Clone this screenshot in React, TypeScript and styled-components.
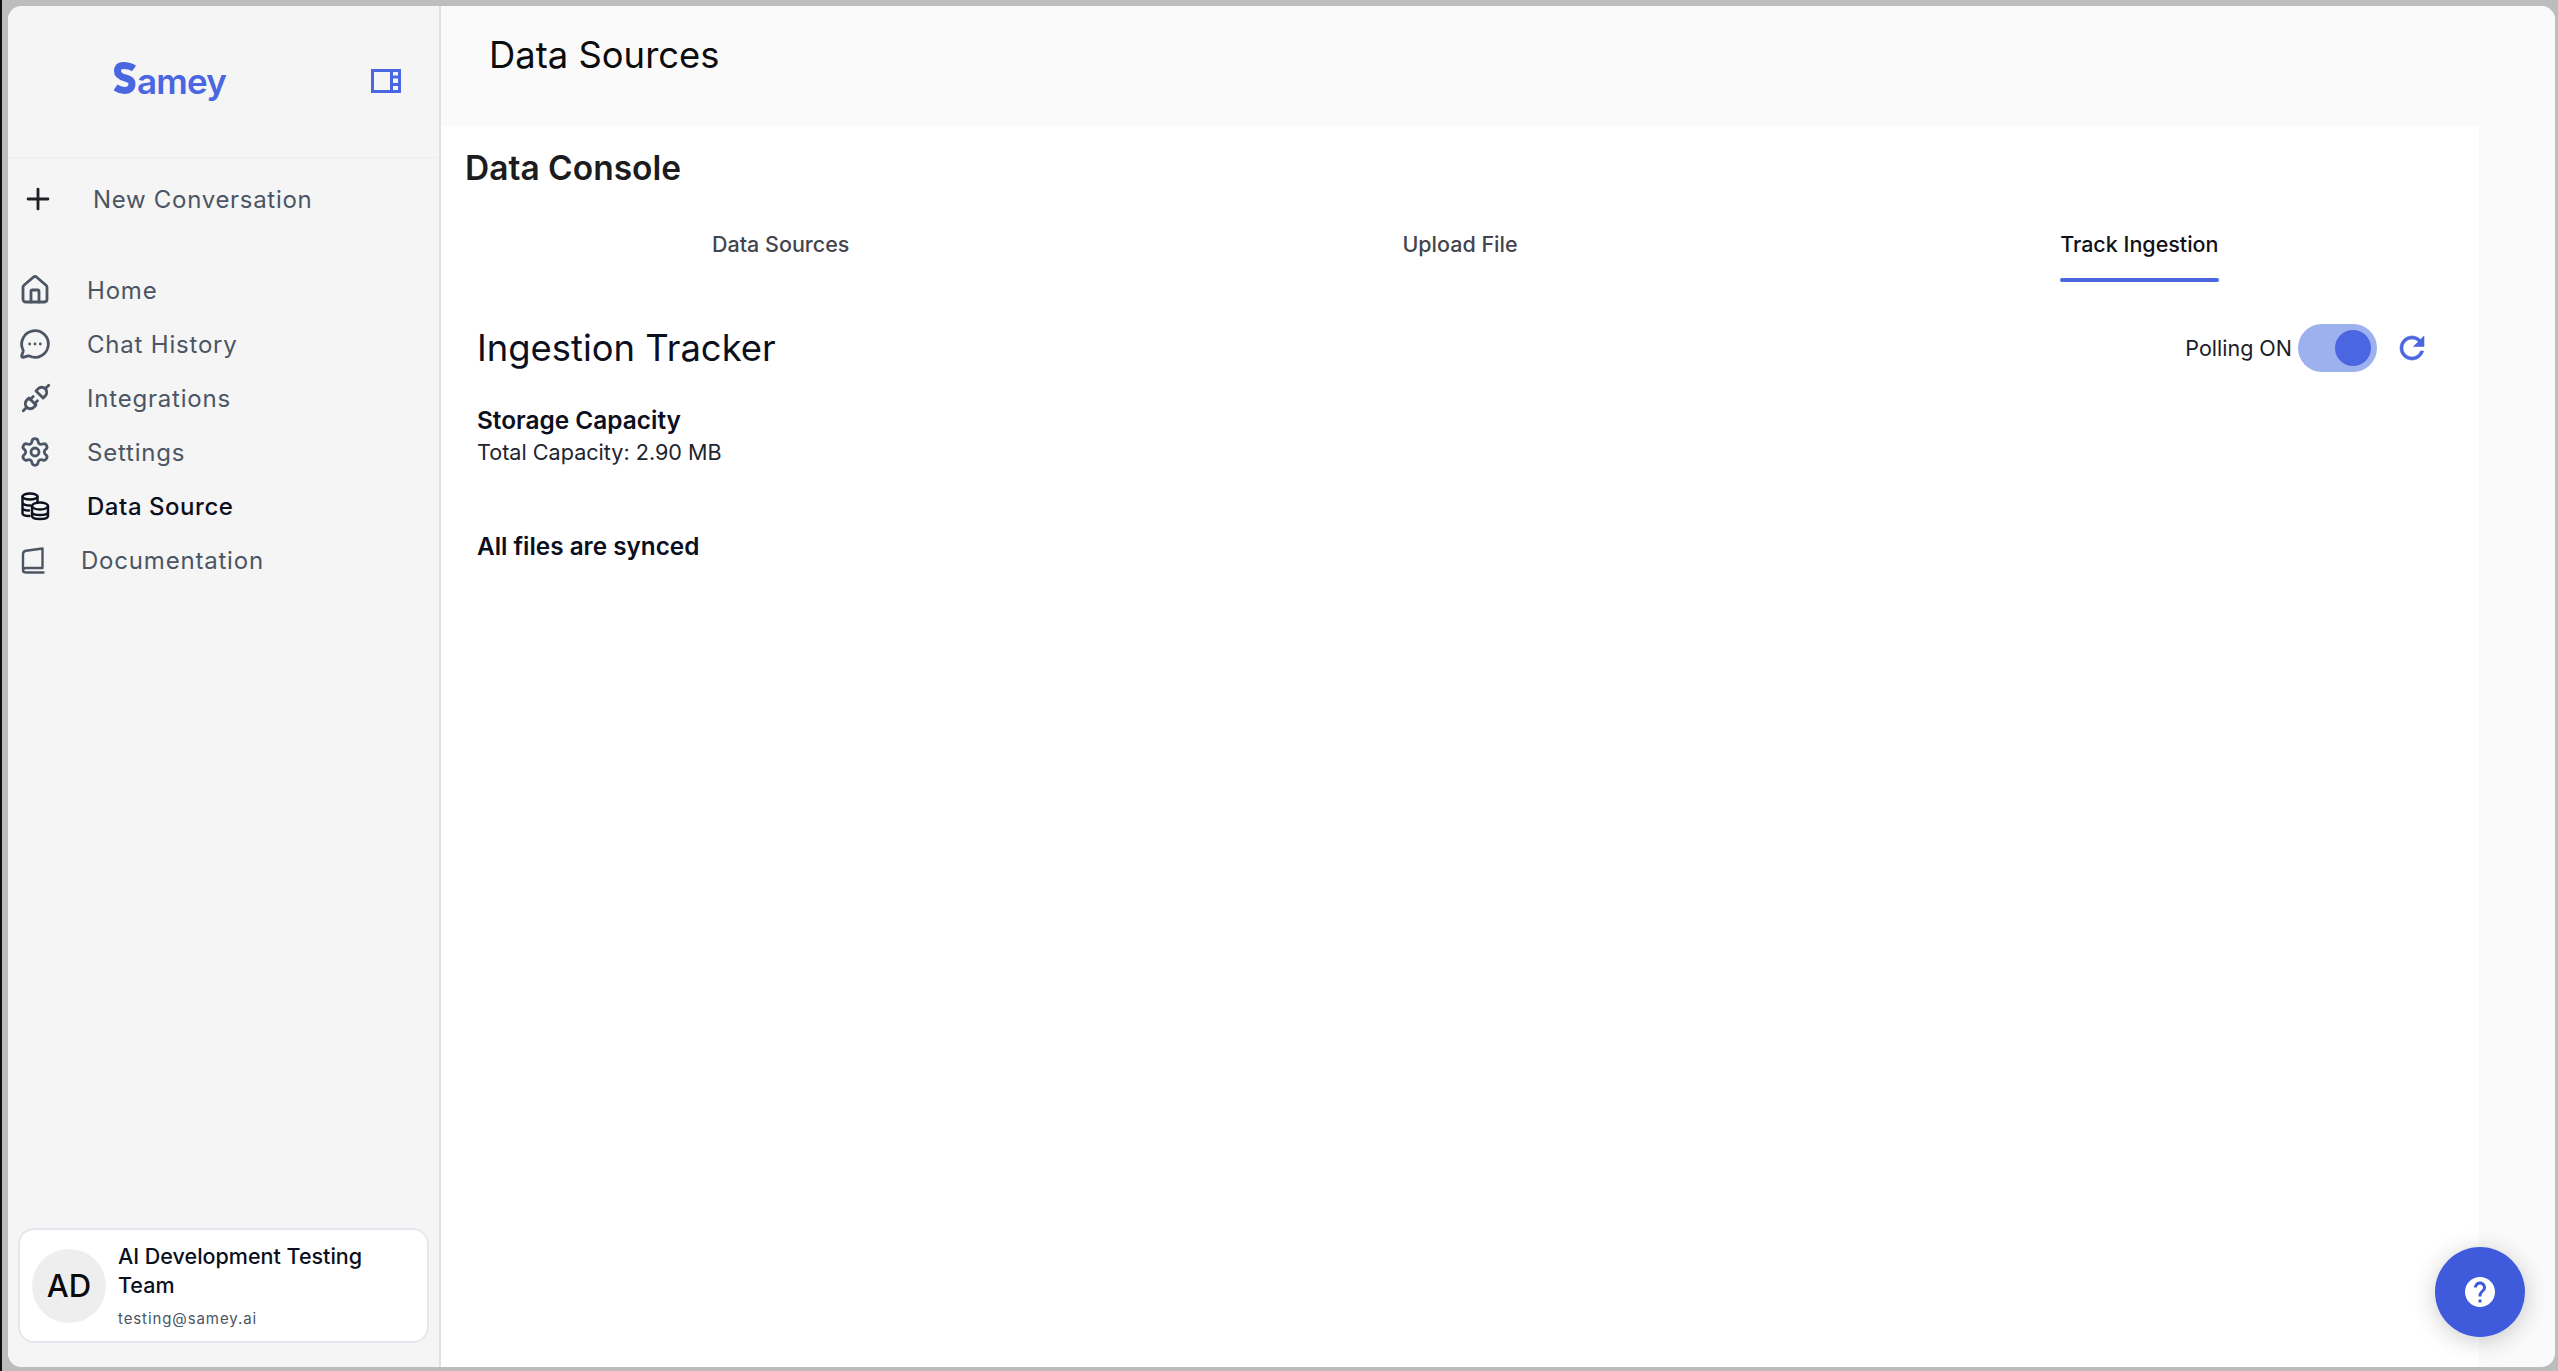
import React from 'react';
import styled, { createGlobalStyle } from 'styled-components';
import { House, MessageCircleMore, Plus, Settings } from 'lucide-react';
import { TbPlugConnected } from 'react-icons/tb';
import { MdHelp } from 'react-icons/md';

const GlobalStyle = createGlobalStyle`
  html, body {
    margin: 0;
    padding: 0;
    height: 100%;
    overflow: hidden;
    background: #bdbdbd;
    font-family: 'Inter', 'Liberation Sans', sans-serif;
  }
  #root { height: 100%; }
  * { box-sizing: border-box; }
`;

const LogoMark = () => (
  <svg width="22" height="32" viewBox="0 0 22 32" fill="none" stroke="#4a66e0" strokeWidth="7">
    <path d="M20 6.500C16 3.500 12 3.500 9 3.500 5 3.500 3.500 6 3.500 9c0 4 4 6 8 7 4 1 6.500 3 6.500 6 0 4-3 6.500-7.500 6.500-3 0-6-1-9-3" />
  </svg>
);

const PanelIcon = () => (
  <svg width="30" height="24" viewBox="0 0 30 24" fill="none" stroke="#4a66e0" strokeWidth="3">
    <rect x="1.500" y="1.500" width="27" height="21" />
    <path d="M20.500 1.500v21" />
    <path d="M21 8h8M21 15.500h8" />
  </svg>
);

const StackIcon = () => (
  <svg width="34" height="34" viewBox="-2 -3 34 34" fill="none" stroke="#0c0f1d" strokeWidth="2.400" strokeLinecap="round">
    <ellipse cx="9" cy="4.500" rx="7.500" ry="3" />
    <path d="M1.500 4.500v17c0 1.500 3 2.500 7 2.500M1.500 10.500c0 1.500 3 3 7.500 3M1.500 16c0 1.500 3 2.500 6.500 2.500M16.500 4.500v6" />
    <ellipse cx="19" cy="14" rx="8" ry="3.500" />
    <path d="M11 14v10c0 2 3.500 3 8 3s8-1 8-3V14M11 20c0 2 3.500 3 8 3s8-1 8-3" />
  </svg>
);

const BookIcon = () => (
  <svg width="34" height="34" viewBox="-2.500 -4 34 34" fill="none" stroke="#4b5563" strokeWidth="2.400" strokeLinecap="round" strokeLinejoin="round">
    <path d="M1.500 22V7c0-2 1-3 3-3.300L21 1.500V21H5c-2 0-3.500 1-3.500 2.500S3 25.500 5 25.500h17" />
  </svg>
);

const RefreshIcon = () => (
  <svg width="36" height="36" viewBox="0 0 24 24" fill="#4a66e0" stroke="#4a66e0" strokeWidth="0.4">
    <path d="M17.650 6.350C16.200 4.900 14.210 4 12 4c-4.420 0-7.990 3.580-7.990 8s3.570 8 7.990 8c3.730 0 6.840-2.550 7.730-6h-2.080c-.82 2.330-3.040 4-5.650 4-3.310 0-6-2.690-6-6s2.690-6 6-6c1.660 0 3.140.69 4.220 1.780L13 11h7V4l-2.350 2.350z" />
  </svg>
);

const navItems = [
  { label: 'Home', icon: <House size={32} strokeWidth={2.100} /> },
  { label: 'Chat History', icon: <MessageCircleMore size={32} strokeWidth={2.100} /> },
  { label: 'Integrations', icon: <TbPlugConnected size={34} /> },
  { label: 'Settings', icon: <Settings size={32} strokeWidth={2.100} /> },
  { label: 'Data Source', icon: <StackIcon />, active: true },
  { label: 'Documentation', icon: <BookIcon />, narrow: true },
];

const tabs = ['Data Sources', 'Upload File', 'Track Ingestion'];

const App = () => {
  return (
    <>
      <GlobalStyle />
      <Screen>
        <AppWindow>
          <Sidebar>
            <SideHeader>
              <Logo>
                <LogoMark />
                <LogoText>amey</LogoText>
              </Logo>
              <PanelButton>
                <PanelIcon />
              </PanelButton>
            </SideHeader>
            <NewChat>
              <Plus size={34} color="#1f2024" strokeWidth={2} />
              <NewChatLabel>New Conversation</NewChatLabel>
            </NewChat>
            <Nav>
              {navItems.map((item) => (
                <NavRow key={item.label} $active={item.active} $narrow={item.narrow}>
                  <NavIcon>{item.icon}</NavIcon>
                  <span>{item.label}</span>
                </NavRow>
              ))}
            </Nav>
            <UserCard>
              <Avatar>AD</Avatar>
              <UserInfo>
                <UserName>AI Development Testing Team</UserName>
                <UserEmail>testing@samey.ai</UserEmail>
              </UserInfo>
            </UserCard>
          </Sidebar>
          <Main>
            <PageHeader>
              <PageTitle>Data Sources</PageTitle>
            </PageHeader>
            <Content>
              <ConsoleTitle>Data Console</ConsoleTitle>
              <Tabs>
                {tabs.map((tab, i) => (
                  <Tab key={tab}>
                    <TabLabel $active={i === 2}>{tab}</TabLabel>
                  </Tab>
                ))}
              </Tabs>
              <Panel>
                <PanelHead>
                  <PanelTitle>Ingestion Tracker</PanelTitle>
                  <Controls>
                    <PollingLabel>Polling ON</PollingLabel>
                    <Toggle>
                      <Knob />
                    </Toggle>
                    <RefreshButton>
                      <RefreshIcon />
                    </RefreshButton>
                  </Controls>
                </PanelHead>
                <SectionTitle>Storage Capacity</SectionTitle>
                <CapacityText>Total Capacity: 2.90 MB</CapacityText>
                <SyncedText>All files are synced</SyncedText>
              </Panel>
            </Content>
          </Main>
          <HelpButton>
            <MdHelp size={36} color="#fff" />
          </HelpButton>
        </AppWindow>
      </Screen>
    </>
  );
};

const Screen = styled.div`
  height: 100%;
  padding: 6px 3px 4px 6px;
  border-left: 2px solid #111;
`;

const AppWindow = styled.div`
  position: relative;
  display: flex;
  height: 100%;
  border-radius: 14px;
  overflow: hidden;
  background: #fafafa;
`;

const Sidebar = styled.aside`
  display: flex;
  flex-direction: column;
  flex: 0 0 433px;
  background: #f5f5f5;
  border-right: 2px solid #e0e0e0;
  padding-bottom: 24px;
`;

const SideHeader = styled.div`
  display: flex;
  align-items: center;
  justify-content: space-between;
  height: 152px;
  padding: 0 38px 2px 106px;
  border-bottom: 1px solid #eeeeee;
`;

const Logo = styled.div`
  display: flex;
  align-items: baseline;
  gap: 1px;
  color: #4a66e0;
`;

const LogoText = styled.span`
  font-size: 35px;
  font-weight: 600;
  line-height: 38px;
  letter-spacing: -0.8px;
`;

const PanelButton = styled.div`
  display: flex;
`;

const NewChat = styled.div`
  display: flex;
  align-items: center;
  gap: 38px;
  height: 36px;
  margin-top: 23px;
  padding-left: 13px;
`;

const NewChatLabel = styled.span`
  font-size: 24px;
  letter-spacing: 0.7px;
  color: #4b5563;
`;

const Nav = styled.nav`
  display: flex;
  flex-direction: column;
  margin-top: 46px;
`;

const NavRow = styled.div<{ $active?: boolean; $narrow?: boolean }>`
  display: flex;
  align-items: center;
  gap: ${({ $narrow }) => ($narrow ? '28px' : '34px')};
  height: 54px;
  padding-left: 11px;
  font-size: 24px;
  letter-spacing: ${({ $active }) => ($active ? '0.55px' : '0.8px')};
  font-weight: ${({ $active }) => ($active ? 500 : 400)};
  color: ${({ $active }) => ($active ? '#0c0f1d' : '#4b5563')};
`;

const NavIcon = styled.span`
  display: flex;
  width: 34px;
  color: #4b5563;
`;

const UserCard = styled.div`
  display: flex;
  align-items: center;
  gap: 12px;
  width: 411px;
  height: 115px;
  margin: auto 0 0 10px;
  padding: 0 12px;
  background: #fff;
  border: 2px solid #e4e7ee;
  border-radius: 16px;
`;

const Avatar = styled.div`
  display: flex;
  align-items: center;
  justify-content: center;
  flex: 0 0 74px;
  height: 74px;
  border-radius: 50%;
  background: #eeeeee;
  color: #0a0a0a;
  font-size: 31px;
  font-weight: 500;
`;

const UserInfo = styled.div`
  display: flex;
  flex-direction: column;
  min-width: 0;
`;

const UserName = styled.div`
  font-size: 21.500px;
  font-weight: 500;
  line-height: 29px;
  color: #0c0f1d;
`;

const UserEmail = styled.div`
  margin-top: 9px;
  font-size: 15px;
  line-height: 20px;
  letter-spacing: 0.9px;
  color: #4b5563;
`;

const Main = styled.main`
  display: flex;
  flex-direction: column;
  flex: 1;
  min-width: 0;
  padding-right: 76px;
`;

const PageHeader = styled.header`
  height: 120px;
  margin-right: -76px;
  padding: 29px 0 0 48px;
  background: #fafafa;
`;

const PageTitle = styled.h1`
  margin: 0;
  font-size: 36.400px;
  line-height: 40px;
  font-weight: 400;
  color: #0c0c0c;
`;

const Content = styled.section`
  flex: 1;
  background: #fff;
`;

const ConsoleTitle = styled.h2`
  margin: 22px 0 0 24px;
  font-size: 33.500px;
  line-height: 40px;
  font-weight: 600;
  color: #1c1c1e;
`;

const Tabs = styled.div`
  display: grid;
  grid-template-columns: repeat(3, 1fr);
  margin-top: 29px;
`;

const Tab = styled.div`
  display: flex;
  justify-content: center;
`;

const TabLabel = styled.span<{ $active?: boolean }>`
  display: flex;
  flex-direction: column;
  height: 65px;
  padding-top: 14px;
  font-size: 21.500px;
  line-height: 26px;
  font-weight: 500;
  color: ${({ $active }) => ($active ? '#111118' : '#45454d')};

  &::after {
    content: '';
    height: 4px;
    margin-top: 21px;
    border-radius: 2px;
    background: ${({ $active }) => ($active ? '#4a66e0' : 'transparent')};
  }
`;

const Panel = styled.div`
  padding: 42px 48px 0 36px;
`;

const PanelHead = styled.div`
  display: flex;
  align-items: center;
  justify-content: space-between;
  height: 48px;
`;

const PanelTitle = styled.h3`
  margin: 0;
  font-size: 36.400px;
  font-weight: 400;
  line-height: 48px;
  color: #0c0f1d;
`;

const Controls = styled.div`
  display: flex;
  align-items: center;
`;

const PollingLabel = styled.span`
  font-size: 21.500px;
  color: #1a1c28;
  margin-right: 6px;
`;

const Toggle = styled.div`
  display: flex;
  align-items: center;
  justify-content: flex-end;
  width: 79px;
  height: 48px;
  padding-right: 6px;
  border-radius: 24px;
  background: #9db1ee;
`;

const Knob = styled.div`
  width: 36px;
  height: 36px;
  border-radius: 50%;
  background: #4a66e0;
`;

const RefreshButton = styled.div`
  display: flex;
  margin-left: 17px;
  margin-right: 1px;
`;

const SectionTitle = styled.div`
  margin-top: 33px;
  font-size: 24.400px;
  line-height: 30px;
  font-weight: 600;
  color: #0c0f1d;
`;

const CapacityText = styled.div`
  margin-top: 2px;
  font-size: 21.600px;
  line-height: 30px;
  color: #22242f;
`;

const SyncedText = styled.div`
  margin-top: 64px;
  font-size: 24.300px;
  line-height: 30px;
  font-weight: 600;
  color: #0c0f1d;
`;

const HelpButton = styled.div`
  position: absolute;
  right: 30px;
  bottom: 30px;
  display: flex;
  align-items: center;
  justify-content: center;
  width: 90px;
  height: 90px;
  border-radius: 50%;
  background: #3f5bdc;
  box-shadow: 0 4px 24px rgba(0, 0, 0, 0.2);
`;

export default App;
